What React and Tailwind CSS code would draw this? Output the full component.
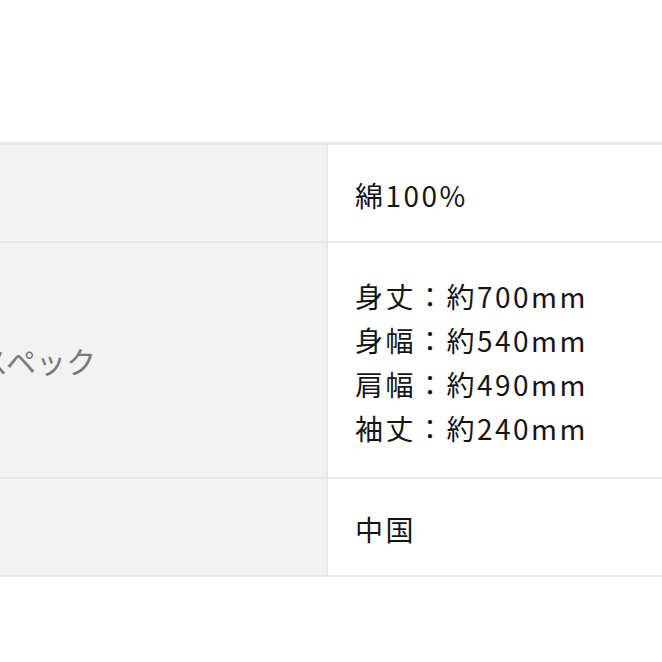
import React from "react";

const rows = [
  { label: "", value: ["綿100%"], height: "h-[98px]" },
  {
    label: "スペック",
    value: ["身丈：約700mm", "身幅：約540mm", "肩幅：約490mm", "袖丈：約240mm"],
    height: "h-[236px]",
  },
  { label: "", value: ["中国"], height: "h-[98px]" },
];

const App = () => {
  return (
    <div
      className="w-[662px] h-[662px] overflow-hidden bg-white pt-[142px]"
      style={{ fontFamily: '"Noto Sans CJK JP", "Noto Sans", sans-serif' }}
    >
      <div className="-ml-[150px] w-[1000px] border-t-[3px] border-[#e8e8e8]">
        {rows.map((row, i) => (
          <div key={i} className={`flex border-b-2 border-[#e8e8e8] ${row.height}`}>
            {/* label */}
            <div className="w-[478px] shrink-0 flex items-center bg-[#f2f2f2] border-r-2 border-[#e8e8e8] pl-[128px]">
              <span className="text-[30px] text-[#7a7a7a] leading-none">{row.label}</span>
            </div>
            {/* value */}
            <div className="flex-1 flex flex-col justify-center pl-[27px] pt-[3px]">
              {row.value.map((line) => (
                <p key={line} className="text-[28px] leading-[44px] tracking-[2.5px] text-[#151515]">
                  {line}
                </p>
              ))}
            </div>
          </div>
        ))}
      </div>
    </div>
  );
};

export default App;
